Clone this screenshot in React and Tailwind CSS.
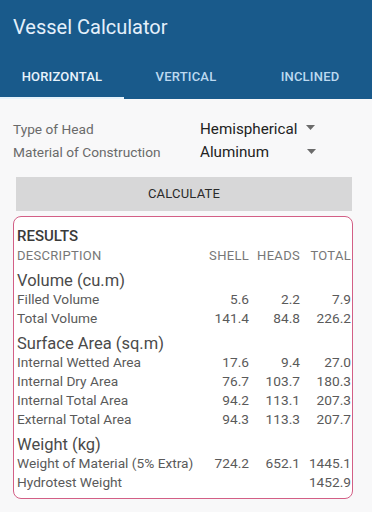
import React from "react";

const sections = [
  {
    title: "Volume (cu.m)",
    rows: [
      ["Filled Volume", "5.6", "2.2", "7.9"],
      ["Total Volume", "141.4", "84.8", "226.2"],
    ],
  },
  {
    title: "Surface Area (sq.m)",
    rows: [
      ["Internal Wetted Area", "17.6", "9.4", "27.0"],
      ["Internal Dry Area", "76.7", "103.7", "180.3"],
      ["Internal Total Area", "94.2", "113.1", "207.3"],
      ["External Total Area", "94.3", "113.3", "207.7"],
    ],
  },
  {
    title: "Weight (kg)",
    rows: [
      ["Weight of Material (5% Extra)", "724.2", "652.1", "1445.1"],
      ["Hydrotest Weight", "", "", "1452.9"],
    ],
  },
];

function Caret() {
  return (
    <svg width="9" height="5" viewBox="0 0 9 5" className="block">
      <path d="M0 0 L9 0 L4.5 5 Z" fill="#6b6b6b" />
    </svg>
  );
}

function Row({ cells, className }) {
  return (
    <div className={"grid grid-cols-[1fr_51px_51px_51px] " + className}>
      <span className="whitespace-nowrap">{cells[0]}</span>
      <span className="text-right">{cells[1]}</span>
      <span className="text-right">{cells[2]}</span>
      <span className="text-right">{cells[3]}</span>
    </div>
  );
}

export default function App() {
  return (
    <div
      className="w-[372px] h-[512px] bg-[#f8f8f9] overflow-hidden"
      style={{ fontFamily: "Roboto, 'Liberation Sans', sans-serif" }}
    >
      {/* Header */}
      <div className="bg-[#195a8b]">
        <div className="h-[51px] pl-[13px] pt-[13px] text-[20px] leading-[28px] text-[#e4f0fb]">
          Vessel Calculator
        </div>
        <div className="grid grid-cols-3 h-[48px] text-[13px] font-medium tracking-[0.2px]">
          <div className="flex flex-col">
            <div className="flex-1 flex items-center justify-center pt-[6px] text-[#e8f3fc]">
              HORIZONTAL
            </div>
            <div className="h-[2px] bg-[#e6f2fb]" />
          </div>
          <div className="flex items-center justify-center pt-[4px] text-[#bcd9f0]">
            VERTICAL
          </div>
          <div className="flex items-center justify-center pt-[4px] text-[#bcd9f0]">
            INCLINED
          </div>
        </div>
      </div>

      {/* Form */}
      <div className="pt-[19px] pl-[13px]">
        <div className="flex items-center h-[23px]">
          <span className="w-[187px] text-[13.7px] text-[#6a6a6a]">Type of Head</span>
          <span className="w-[106px] text-[15.2px] text-[#222]">Hemispherical</span>
          <span className="pb-[4px]">
            <Caret />
          </span>
        </div>
        <div className="flex items-center h-[23px]">
          <span className="w-[187px] text-[13.7px] text-[#6a6a6a]">
            Material of Construction
          </span>
          <span className="w-[107px] text-[15.2px] text-[#222]">Aluminum</span>
          <span className="pb-[2px]">
            <Caret />
          </span>
        </div>
      </div>

      <div className="ml-[16px] mr-[20px] mt-[13px] h-[34px] bg-[#d7d7d8] flex items-center justify-center text-[13px] text-[#2a2a2a] tracking-[0.2px]">
        CALCULATE
      </div>

      {/* Results */}
      <div className="ml-[13px] mr-[19px] mt-[5px] border border-[#d35f86] rounded-[8px] bg-white pt-[10px] pb-[6px] pl-[3px] pr-[1px] text-[13.7px] leading-[19px] text-[#5a5a5a]">
        <div className="text-[15px] font-medium text-[#3a3a3a]">RESULTS</div>
        <Row
          cells={["DESCRIPTION", "SHELL", "HEADS", "TOTAL"]}
          className="text-[13px] text-[#777] tracking-[0.3px]"
        />
        {sections.map((s) => (
          <div key={s.title}>
            <div className="mt-[6px] text-[16.5px] leading-[19px] text-[#4a4a4a]">
              {s.title}
            </div>
            {s.rows.map((r) => (
              <Row key={r[0]} cells={r} className="" />
            ))}
          </div>
        ))}
      </div>
    </div>
  );
}
